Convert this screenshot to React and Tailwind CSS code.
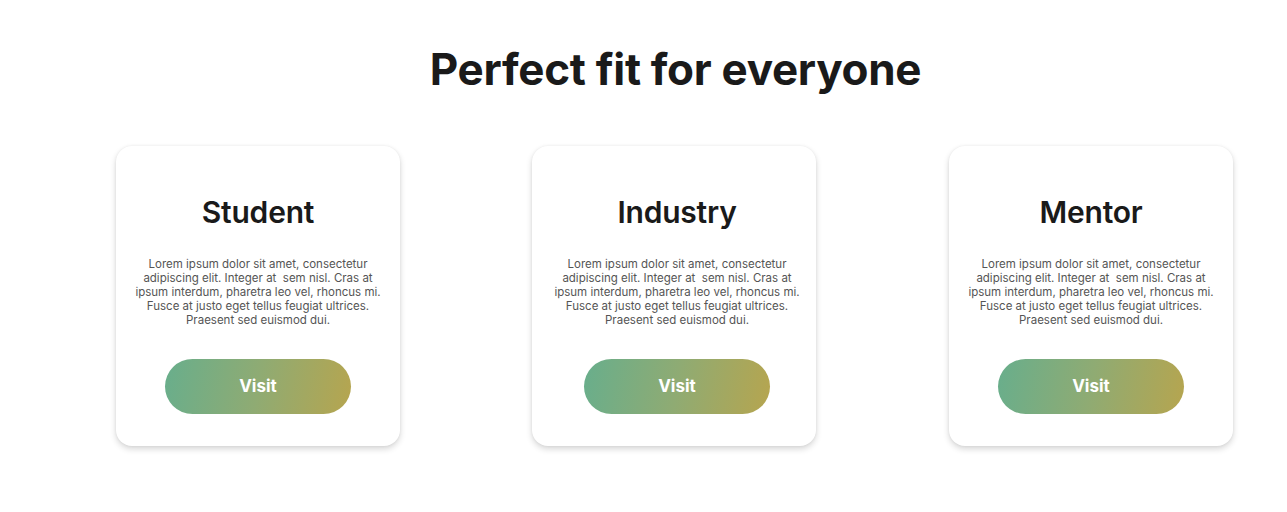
import React from "react";

const cards = ["Student", "Industry", "Mentor"];

function Card({ title, shift }) {
  return (
    <div className={`w-[284px] h-[300px] bg-white rounded-[16px] shadow-[0_3px_6px_rgba(0,0,0,0.16),0_0_3px_rgba(0,0,0,0.06)] flex flex-col items-center ${shift ? "pl-[6px]" : ""}`}>
      <h2 className="mt-[48px] text-[30px] leading-[36px] font-semibold text-[#1a1a1a] tracking-[-0.2px]">{title}</h2>
      <p className="mt-[27px] w-[260px] text-center text-[11.5px] leading-[14px] text-[#555555]">
        Lorem ipsum dolor sit amet, consectetur adipiscing elit. Integer at&nbsp; sem nisl. Cras at ipsum interdum, pharetra leo vel, rhoncus mi. Fusce at justo eget tellus feugiat ultrices. Praesent sed euismod dui.
      </p>
      <button className="mt-[32px] w-[186px] h-[55px] rounded-full bg-[linear-gradient(100deg,#68ae8c_0%,#8fab73_50%,#b6a54f_100%)] text-white text-[17px] font-bold">
        Visit
      </button>
    </div>
  );
}

export default function App() {
  return (
    <div className="w-[1287px] h-[512px] bg-white font-['Inter',sans-serif]">
      <h1 className="pt-[41px] pl-[118px] pr-[54px] text-center text-[44px] leading-[56px] font-bold text-[#1a1a1a] tracking-[-0.3px]">
        Perfect fit for everyone
      </h1>
      <div className="mt-[49px] pl-[116px] flex gap-[132px]">
        {cards.map((c, i) => (
          <div key={c} className={i === 2 ? "ml-[1px]" : ""}>
            <Card title={c} shift={i === 1} />
          </div>
        ))}
      </div>
    </div>
  );
}
